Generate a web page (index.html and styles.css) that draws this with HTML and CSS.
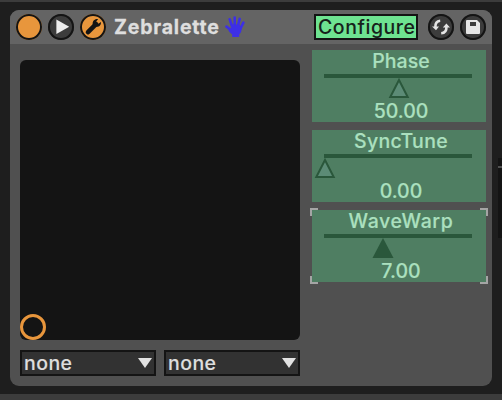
FILE: index.html
```
<!DOCTYPE html>
<html lang="en">
<head>
<meta charset="utf-8">
<title>Zebralette</title>
<link rel="stylesheet" href="styles.css">
</head>
<body>
<main class="device">
  <header class="bar">
    <span class="round on"></span>
    <span class="round"><svg viewBox="0 0 26 26"><path d="M8.4 5.6 21.2 12.7 8.4 20z" fill="#eee"/></svg></span>
    <span class="round on"><svg viewBox="0 0 26 26"><path d="M8 18.2 16 10.2" stroke="#141414" stroke-width="4.6" stroke-linecap="round"/><path d="M18.2 5.1 16.2 7.6 18.4 9.7 20.9 7.9C21.4 11.2 18.8 13.4 15.2 12.7L12.7 10.4C12.3 7 14.8 4.4 18.2 5.1z" fill="#141414"/></svg></span>
    <h1 class="title">Zebralette</h1>
    <svg class="hand" viewBox="0 0 20 22"><g stroke="#3d2fe6" stroke-width="2.6" stroke-linecap="round" fill="none"><path d="M1.5 10.6 6 14M4.7 3.3 7.3 11M9.7 1.5V11M14.7 2.9 12.6 11M18.4 6.6 15 13.5"/></g><path d="M5.6 8.5H14.2L17 11.5 16 16.3 14.2 18.4V21H7.2V18.4L4.2 15.7 2.2 11.8 6.2 13z" fill="#3d2fe6"/></svg>
    <span class="configure">Configure</span>
    <span class="round swap"><svg viewBox="0 0 26 26"><g fill="none" stroke="#e4e4e4" stroke-width="2.6"><path d="M12.2 6.8C8.8 7.1 7.2 9.7 7.4 13.2M13.2 19.2C16.8 18.9 18.6 16.5 18.4 13"/></g><path d="M4 12.4H11L8 16.2zM14.8 13.6H22L18.4 9.6z" fill="#e4e4e4"/></svg></span>
    <span class="round"><svg viewBox="0 0 26 26"><path fill-rule="evenodd" d="M6 7Q6 6 7 6H17L20 9V19Q20 20 19 20H7Q6 20 6 19zM10 8V12H16V8z" fill="#e6e6e6"/></svg></span>
  </header>
  <div class="body">
    <section class="left">
      <div class="pad"><i class="puck"></i></div>
      <div class="selects">
        <div class="select"><span>none</span><svg viewBox="0 0 14 10"><path d="M0 0H14L7 10z" fill="#e2e2e2"/></svg></div>
        <div class="select"><span>none</span><svg viewBox="0 0 14 10"><path d="M0 0H14L7 10z" fill="#e2e2e2"/></svg></div>
      </div>
    </section>
    <section class="params">
      <div class="param">
        <span class="label phase">Phase</span>
        <svg viewBox="0 0 174 24"><path d="M12 2H160" stroke="#2a573b" stroke-width="4"/><path d="M87 6 95.7 23H78.3z" fill="#5c8b76" stroke="#2a573b" stroke-width="2"/></svg>
        <span class="value">50.00</span>
      </div>
      <div class="param">
        <span class="label sync">SyncTune</span>
        <svg viewBox="0 0 174 24"><path d="M12 2H160" stroke="#2a573b" stroke-width="4"/><path d="M13 6 21.7 23H4.3z" fill="#5c8b76" stroke="#2a573b" stroke-width="2"/></svg>
        <span class="value">0.00</span>
      </div>
      <div class="param">
        <span class="label wave">WaveWarp</span>
        <svg viewBox="0 0 174 24"><path d="M12 2H160" stroke="#2a573b" stroke-width="4"/><path d="M71 4 81.5 24H60.5z" fill="#2a573b"/></svg>
        <span class="value">7.00</span>
        <svg class="corners" viewBox="0 0 178 76"><path d="M1 8V1H8M170 1H177V8M177 68V75H170M8 75H1V68" fill="none" stroke="#a5a5a5" stroke-width="2"/></svg>
      </div>
    </section>
  </div>
</main>
<aside class="neighbor"></aside>
</body>
</html>
```
FILE: styles.css
```
* { box-sizing: border-box; }
body {
  margin: 0;
  width: 502px;
  height: 400px;
  overflow: hidden;
  position: relative;
  padding: 8px 10px;
  background: #1e1e1e;
  border-top: 2px solid #3c3c3c;
  border-bottom: 6px solid #3c3c3c;
  font-family: Inter, "Liberation Sans", sans-serif;
  font-size: 19.5px;
  font-weight: 500;
  line-height: 24px;
  color: #dedede;
  -webkit-text-stroke: 0.15px currentColor;
}
svg { display: block; }
.device {
  width: 482px;
  height: 376px;
  border-radius: 9px;
  overflow: hidden;
  background: #505050;
}
.bar {
  height: 34px;
  padding: 0 6px;
  display: flex;
  align-items: center;
  background: #646464;
}
.round {
  width: 26px;
  height: 26px;
  flex: none;
  margin-right: 6px;
  border-radius: 50%;
  background: #3c3c3c;
  box-shadow: inset 0 0 0 2px #141414;
}
.round:last-child { margin-right: 0; }
.round.on { background: #e8963c; }
.title {
  margin: 0 0 0 2px;
  width: 111px;
  font-size: 19.5px;
  font-weight: 700;
  letter-spacing: 0.8px;
  white-space: nowrap;
  -webkit-text-stroke: 0.3px currentColor;
}
.hand { width: 20px; height: 22px; margin-top: -1px; }
.configure {
  margin-left: auto;
  margin-right: 10px;
  width: 104px;
  height: 26px;
  padding-left: 2px;
  border: 2px solid #141414;
  background: #6ee391;
  color: #17221b;
  line-height: 22px;
  letter-spacing: 0.55px;
  white-space: nowrap;
  -webkit-text-stroke: 0;
}
.body {
  display: flex;
  gap: 12px;
  padding: 6px 6px 0 10px;
}
.left { width: 280px; padding-top: 10px; }
.pad {
  height: 280px;
  display: flex;
  align-items: flex-end;
  border-radius: 6px;
  background: #141414;
}
.puck {
  width: 26px;
  height: 26px;
  border: 3px solid #e8963c;
  border-radius: 50%;
}
.selects { display: flex; gap: 8px; margin-top: 10px; }
.select {
  width: 136px;
  height: 26px;
  padding: 0 2px;
  display: flex;
  align-items: center;
  justify-content: space-between;
  border: 2px solid #141414;
  background: #323232;
  letter-spacing: 0.45px;
}
.select svg { width: 14px; height: 10px; }
.params { width: 174px; display: flex; flex-direction: column; gap: 8px; }
.param {
  position: relative;
  height: 72px;
  background: #4f7e62;
  color: #abe0bf;
  text-align: center;
}
.label, .value { display: block; height: 24px; line-height: 23px; padding-left: 4px; }
.sync { letter-spacing: 0.3px; }
.wave { letter-spacing: 0.6px; }
.value { line-height: 26px; }
.param svg { width: 174px; height: 24px; }
.param .corners { position: absolute; left: -2px; top: -2px; width: 178px; height: 76px; }
.neighbor {
  position: absolute;
  right: 0;
  top: 156px;
  width: 4px;
  height: 80px;
  background: linear-gradient(#141414 8px, #505050 8px 10px, #141414 10px);
}
```
